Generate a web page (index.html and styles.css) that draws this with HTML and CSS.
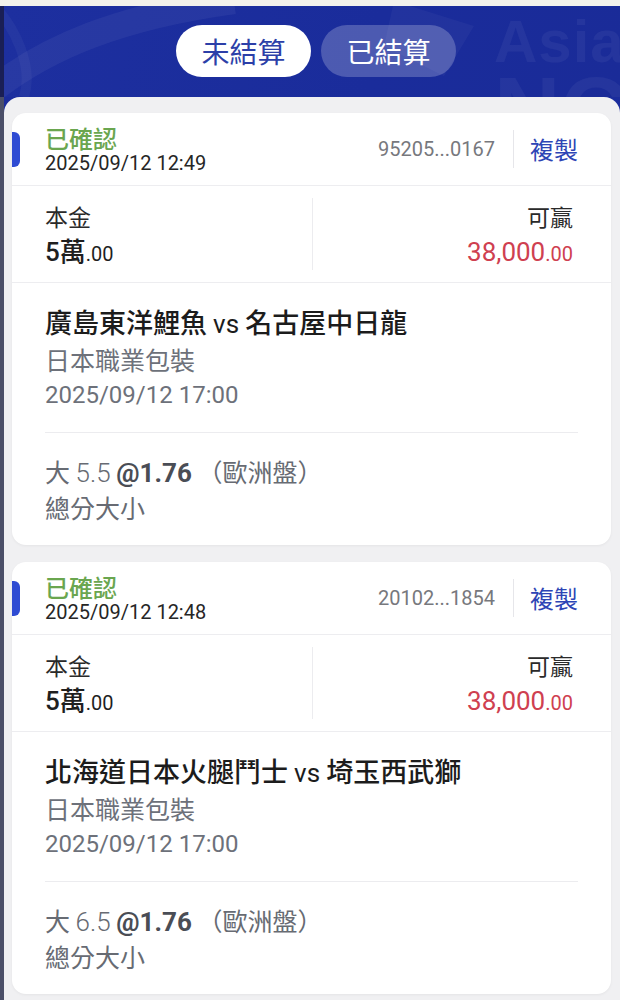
FILE: index.html
```html
<!DOCTYPE html>
<html lang="zh-Hant">
<head>
<meta charset="utf-8">
<title>注單</title>
<link rel="stylesheet" href="styles.css">
</head>
<body>
<div class="app">
  <div class="topbar"></div>
  <div class="shell">
    <div class="edge"></div>
    <div class="main">
      <header class="hero">
        <svg class="decor" viewBox="0 0 616 91" width="616" height="91" aria-hidden="true">
          <path d="M-20 91 C 40 40, 120 10, 230 -5" fill="none" stroke="rgba(255,255,255,0.05)" stroke-width="26"/>
          <path d="M20 91 C 30 60, 10 20, -10 0" fill="none" stroke="rgba(255,255,255,0.04)" stroke-width="10"/>
          <path d="M390 -5 L470 20 L440 70 L380 40 Z" fill="rgba(255,255,255,0.035)"/>
        </svg>
        <div class="watermark" aria-hidden="true"><span class="wm-top">Asia's</span><span class="wm-big">NO</span></div>
        <nav class="tabs">
          <button class="tab tab-active">未結算</button>
          <button class="tab">已結算</button>
        </nav>
      </header>
      <section class="list">
        <article class="card">
          <div class="card-head">
            <span class="marker"></span>
            <div class="status">
              <div class="status-text">已確認</div>
              <div class="status-time">2025/09/12 12:49</div>
            </div>
            <div class="order-id">95205...0167</div>
            <button class="copy">複製</button>
          </div>
          <div class="amounts">
            <div class="amt amt-left">
              <div class="amt-label">本金</div>
              <div class="amt-value">5萬<small>.00</small></div>
            </div>
            <div class="amt amt-right">
              <div class="amt-label">可贏</div>
              <div class="amt-value win">38,000<small>.00</small></div>
            </div>
          </div>
          <div class="match">
            <div class="teams">廣島東洋鯉魚 <span class="vs">vs</span> 名古屋中日龍</div>
            <div class="league">日本職業包裝</div>
            <div class="kickoff">2025/09/12 17:00</div>
          </div>
          <div class="bet">
            <div class="pick">大 <span class="line">5.5</span> <b>@1.76</b> （歐洲盤）</div>
            <div class="market">總分大小</div>
          </div>
        </article>
        <article class="card">
          <div class="card-head">
            <span class="marker"></span>
            <div class="status">
              <div class="status-text">已確認</div>
              <div class="status-time">2025/09/12 12:48</div>
            </div>
            <div class="order-id">20102...1854</div>
            <button class="copy">複製</button>
          </div>
          <div class="amounts">
            <div class="amt amt-left">
              <div class="amt-label">本金</div>
              <div class="amt-value">5萬<small>.00</small></div>
            </div>
            <div class="amt amt-right">
              <div class="amt-label">可贏</div>
              <div class="amt-value win">38,000<small>.00</small></div>
            </div>
          </div>
          <div class="match">
            <div class="teams">北海道日本火腿鬥士 <span class="vs">vs</span> 埼玉西武獅</div>
            <div class="league">日本職業包裝</div>
            <div class="kickoff">2025/09/12 17:00</div>
          </div>
          <div class="bet">
            <div class="pick">大 <span class="line">6.5</span> <b>@1.76</b> （歐洲盤）</div>
            <div class="market">總分大小</div>
          </div>
        </article>
      </section>
    </div>
  </div>
</div>
</body>
</html>
```

FILE: styles.css
```css
* { box-sizing: border-box; }
html, body {
  margin: 0;
  padding: 0;
  width: 620px;
  height: 1000px;
  overflow: hidden;
  background: #f0f0f2;
  font-family: Roboto, "Noto Sans CJK TC", "Noto Sans", sans-serif;
}
.app { display: flex; flex-direction: column; height: 1000px; }
.topbar { height: 6px; background: #f3f2ec; flex: none; }
.shell { display: flex; flex: 1; }
.edge {
  width: 4px;
  flex: none;
  background: linear-gradient(#1a1f55 0, #1a1f55 91px, #4b4f68 91px, #4b4f68 100%);
}
.main {
  flex: 1;
  background: #1b2c9c;
  display: flex;
  flex-direction: column;
}
.hero {
  position: relative;
  height: 91px;
  flex: none;
  overflow: hidden;
  background: linear-gradient(100deg, #1d2f9f 0%, #1a2c9b 60%, #1a2b98 100%);
}
.decor { position: absolute; left: 0; top: 0; }
.watermark {
  position: absolute;
  left: 490px;
  top: 8px;
  display: flex;
  flex-direction: column;
  font-family: "Liberation Sans", Arial, sans-serif;
  font-weight: 700;
  color: rgba(255,255,255,0.05);
  pointer-events: none;
}
.wm-top { font-size: 60px; line-height: 56px; letter-spacing: 1px; }
.wm-big { font-size: 92px; line-height: 80px; }
.tabs {
  position: relative;
  display: flex;
  justify-content: center;
  gap: 10px;
  padding-top: 19px;
  padding-left: 8px;
}
.tab {
  width: 135px;
  height: 52px;
  border: none;
  border-radius: 26px;
  background: rgba(255,255,255,0.22);
  color: #ffffff;
  font-family: "Noto Sans CJK TC", sans-serif;
  font-size: 28px;
  padding: 0;
  line-height: 52px;
}
.tab-active { background: #ffffff; color: #2c3fa8; }

.list {
  flex: 1;
  background: #f0f0f2;
  border-radius: 16px 16px 0 0;
  padding: 16px 9px 0 8px;
  display: flex;
  flex-direction: column;
  gap: 17px;
}
.card {
  background: #ffffff;
  border-radius: 14px;
  box-shadow: 0 1px 3px rgba(0,0,0,0.05);
  flex: none;
}
.card-head {
  height: 73px;
  display: flex;
  align-items: center;
  border-bottom: 1px solid #ededf0;
  padding-right: 33px;
}
.marker {
  width: 8px;
  height: 35px;
  background: #2e4bd3;
  border-radius: 0 6px 6px 0;
  margin-right: 25px;
  flex: none;
}
.status { flex: 1; display: flex; flex-direction: column; }
.status-text {
  font-family: "Noto Sans CJK TC", sans-serif;
  color: #6aa64f;
  font-size: 24px;
  font-weight: 500;
  height: 28px;
  line-height: 28px;
}
.status-time {
  color: #262626;
  font-size: 20px;
  height: 23px;
  line-height: 23px;
}
.order-id {
  color: #77787d;
  font-size: 20px;
  padding-right: 18px;
}
.copy {
  border: none;
  background: none;
  border-left: 1px solid #e6e6ea;
  height: 38px;
  padding: 0 0 0 16px;
  font-family: "Noto Sans CJK TC", sans-serif;
  font-size: 24px;
  color: #2d45b5;
  line-height: 38px;
}

.amounts {
  display: grid;
  grid-template-columns: 1fr 1fr;
  border-bottom: 1px solid #ededf0;
  height: 97px;
  align-items: center;
}
.amt { display: flex; flex-direction: column; }
.amt-left { padding-left: 33px; }
.amt-right {
  padding-right: 38px;
  align-items: flex-end;
  border-left: 1px solid #ececef;
  height: 72px;
  justify-content: center;
}
.amt-label {
  font-family: "Noto Sans CJK TC", sans-serif;
  font-size: 23px;
  color: #2a2a2a;
  height: 36px;
  line-height: 36px;
}
.amt-value {
  font-size: 26px;
  color: #1f1f1f;
  font-weight: 500;
  height: 36px;
  line-height: 36px;
  font-family: Roboto, "Noto Sans CJK TC", sans-serif;
}
.amt-value small { font-size: 20px; font-weight: 400; }
.amt-value.win { color: #cf4050; font-weight: 400; }

.match {
  margin: 0 33px;
  padding: 20px 0 19px;
  border-bottom: 1px solid #ececef;
}
.teams {
  font-family: "Noto Sans CJK TC", sans-serif;
  font-size: 27px;
  font-weight: 500;
  color: #1c1c1c;
  height: 38px;
  line-height: 38px;
}
.vs { font-family: Roboto, sans-serif; font-weight: 400; font-size: 26px; }
.league, .kickoff {
  font-size: 25px;
  color: #6d717a;
  height: 36px;
  line-height: 36px;
}
.league { font-family: "Noto Sans CJK TC", sans-serif; }
.kickoff { font-family: Roboto, sans-serif; font-size: 24px; }

.bet { padding: 20px 33px 20px; }
.pick, .market {
  font-family: "Noto Sans CJK TC", sans-serif;
  font-size: 25px;
  color: #676b73;
  height: 36px;
  line-height: 36px;
}
.pick .line { font-family: Roboto, sans-serif; font-weight: 300; font-size: 26px; }
.pick b { font-family: Roboto, sans-serif; font-weight: 700; color: #4a4d55; font-size: 26px; }
```
